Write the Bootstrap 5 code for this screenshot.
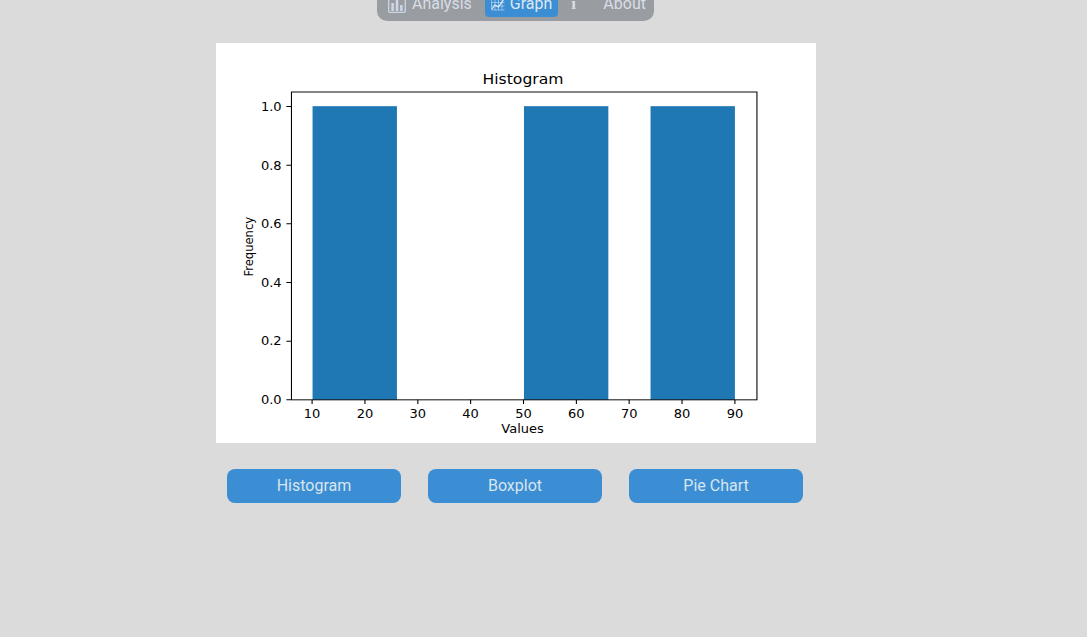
<!DOCTYPE html>
<html lang="en">
<head>
<meta charset="utf-8">
<title>Graph</title>
<link href="https://cdn.jsdelivr.net/npm/bootstrap@5.3.0/dist/css/bootstrap.min.css" rel="stylesheet">
<style>
html,body{height:100%;overflow:hidden}
body{background:#dbdbdb;font-family:Roboto,"Liberation Sans",sans-serif;font-size:16px}
.page-wrap{width:600px;margin-left:216px}
.top-nav{width:277px;height:35px;margin:-14px 0 22px 161px;background:#999ca1;border-radius:0 0 10px 10px;padding:0 8px 4px 11px;align-items:stretch}
.top-nav .nav-link{color:#d8dee6;padding:4px 0 0;line-height:24px;display:flex;align-items:center;gap:6px;white-space:nowrap;border-radius:0}
.top-nav .nav-link.active{background:#3b8ed3;color:#dbe8f3;border-radius:0 0 4px 4px;margin-left:13px;padding:4px 6px 0 6px;gap:5px}
.top-nav .nav-link svg{flex:none}
.tab-info{margin-left:13px;width:19px}
.info-mark{font-family:"Liberation Serif",serif;font-weight:700;font-size:17px}
.tab-about{margin-left:13px}
.plot-box{display:block;width:600px;height:400px;background:#fff}
.plot-box text{font-family:"DejaVu Sans",sans-serif;font-size:13.89px;fill:#000}
.btn-row{gap:27px;margin:26px 0 0 11px}
.btn-chart{width:174px;height:34px;padding:0;background:#3b8ed3;border:0;border-radius:8px;color:#d9e5f0;font-size:16px;line-height:34px}
.btn-chart:hover{background:#3b8ed3;color:#d9e5f0}
</style>
</head>
<body>
<div class="page-wrap">
  <nav class="nav top-nav d-flex">
    <a class="nav-link" href="#">
      <svg width="18" height="20" viewBox="0 0 18 20" fill="none"><rect x=".7" y=".7" width="16.6" height="17.6" rx="1" stroke="#cbd7e6" stroke-width="1.3"/><path d="M4.6 17V9M9 17V4M13.4 17V11" stroke="#cbd7e6" stroke-width="2.6"/></svg>
      <span>Analysis</span>
    </a>
    <a class="nav-link active" href="#">
      <svg width="14" height="15" viewBox="0 0 14 15" fill="none"><path d="M.5 1v13h13M.5 10h13M.5 6.500h13M.5 3h13M4 1v13M7.500 1v13M11 1v13" stroke="#cfe0f0" stroke-width=".6"/><path d="M1 13l3-4 3.500 2L13 3" stroke="#e6eff7" stroke-width="1.100"/></svg>
      <span>Graph</span>
    </a>
    <a class="nav-link tab-info" href="#"><span class="info-mark">i</span></a>
    <a class="nav-link tab-about" href="#">About</a>
  </nav>

  <svg class="plot-box" viewBox="0 0 640 480" preserveAspectRatio="none" role="img" aria-label="Histogram">
    <g fill="#1f77b4">
      <rect x="103" y="75.800" width="90" height="352.400"/>
      <rect x="328.500" y="75.800" width="90" height="352.400"/>
      <rect x="463.500" y="75.800" width="90" height="352.400"/>
    </g>
    <rect x="80.500" y="58.800" width="496.500" height="369.400" fill="none" stroke="#000" stroke-width="1.150"/>
    <g stroke="#000" stroke-width="1.150">
      <path d="M102.500 428.200v4.900M158.900 428.200v4.900M215.300 428.200v4.900M271.600 428.200v4.900M328 428.200v4.900M384.400 428.200v4.900M440.700 428.200v4.900M497.100 428.200v4.900M553.500 428.200v4.900"/>
      <path d="M80 428.200h-4.900M80 357.800h-4.900M80 287.400h-4.900M80 217h-4.900M80 146.600h-4.900M80 76.200h-4.900"/>
    </g>
    <g text-anchor="middle">
      <text x="102.500" y="450.500">10</text><text x="158.900" y="450.500">20</text><text x="215.300" y="450.500">30</text><text x="271.600" y="450.500">40</text><text x="328" y="450.500">50</text><text x="384.400" y="450.500">60</text><text x="440.700" y="450.500">70</text><text x="497.100" y="450.500">80</text><text x="553.500" y="450.500">90</text>
      <text x="327" y="468">Values</text>
      <text x="327.500" y="49.500" style="font-size:16.67px">Histogram</text>
      <text transform="translate(39.500 244.500) rotate(-90)">Frequency</text>
    </g>
    <g text-anchor="end">
      <text x="70" y="433.500">0.0</text><text x="70" y="363">0.2</text><text x="70" y="292.700">0.4</text><text x="70" y="222.300">0.6</text><text x="70" y="151.900">0.8</text><text x="70" y="81.500">1.0</text>
    </g>
  </svg>

  <div class="d-flex btn-row">
    <button type="button" class="btn btn-chart">Histogram</button>
    <button type="button" class="btn btn-chart">Boxplot</button>
    <button type="button" class="btn btn-chart">Pie Chart</button>
  </div>
</div>
</body>
</html>
